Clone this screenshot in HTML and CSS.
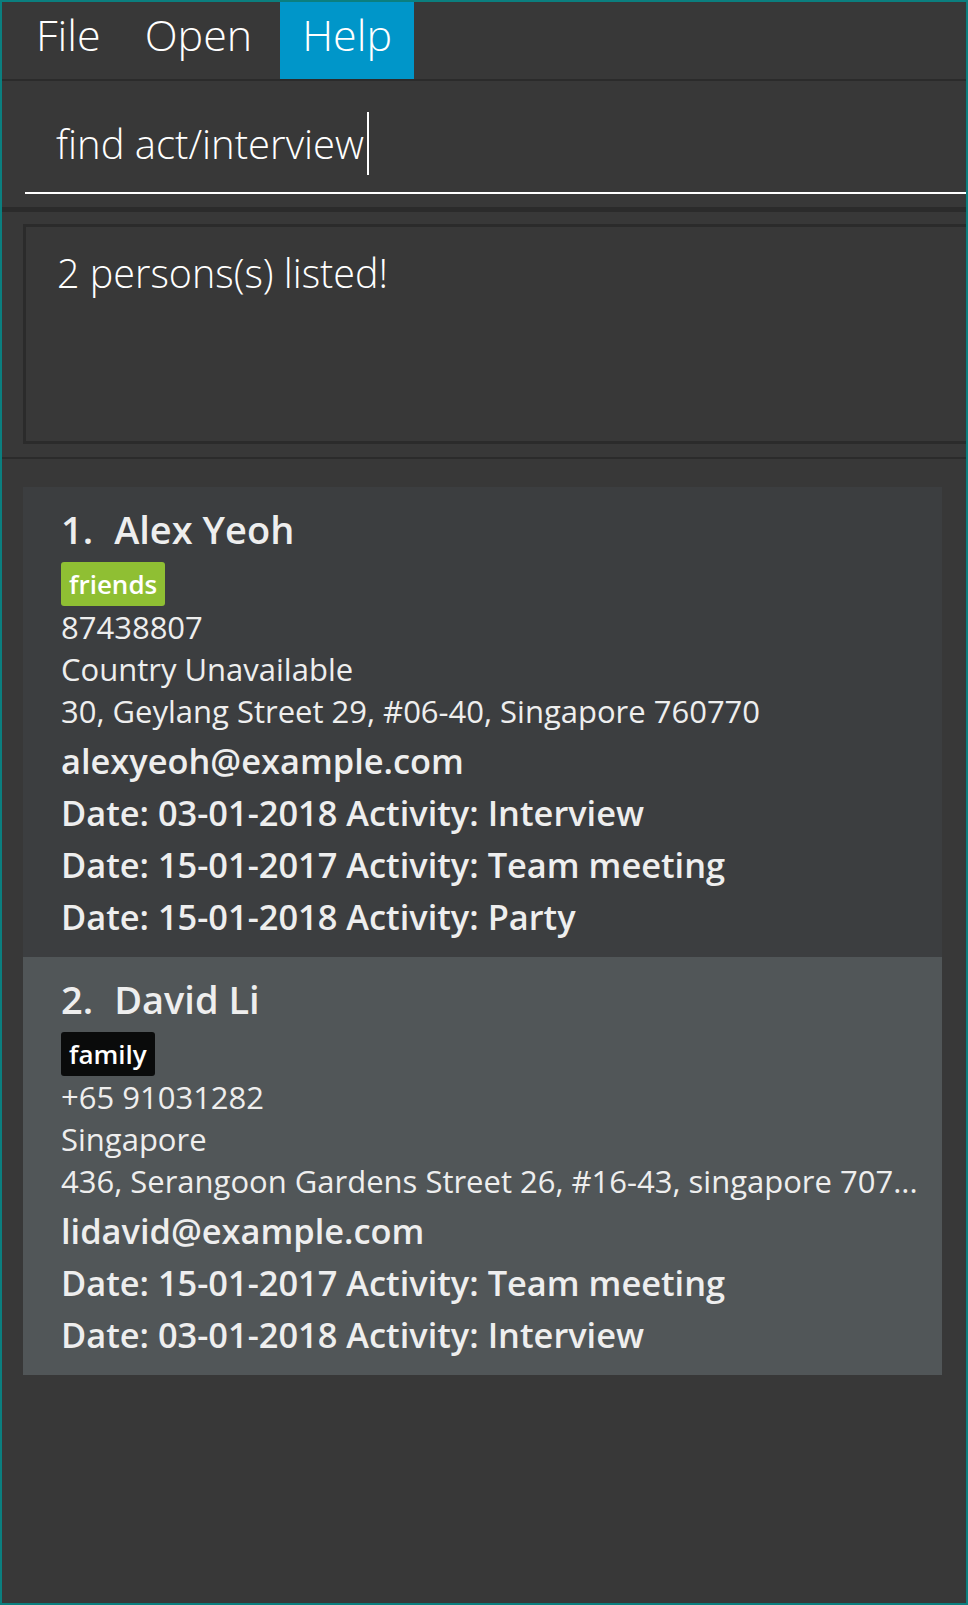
FILE: index.html
```html
<!DOCTYPE html>
<html lang="en">
<head>
<meta charset="utf-8">
<title>Address Book</title>
<link rel="stylesheet" href="styles.css">
</head>
<body>
<div class="window">
  <nav class="menubar">
    <span class="menu-item">File</span>
    <span class="menu-item">Open</span>
    <span class="menu-item active">Help</span>
  </nav>

  <section class="command-pane">
    <div class="command-field">
      <span class="command-text">find act/interview</span><span class="caret"></span>
    </div>
  </section>

  <section class="result-pane">
    <div class="result-box">2 persons(s) listed!</div>
  </section>

  <section class="list-pane">
    <ul class="person-list">
      <li class="card">
        <div class="card-name"><span class="card-id">1.</span><span>Alex Yeoh</span></div>
        <div class="tags"><span class="tag tag-friends">friends</span></div>
        <div class="card-line">87438807</div>
        <div class="card-line">Country Unavailable</div>
        <div class="card-line">30, Geylang Street 29, #06-40, Singapore 760770</div>
        <div class="card-strong card-email">alexyeoh@example.com</div>
        <div class="card-strong">Date: 03-01-2018 Activity: Interview</div>
        <div class="card-strong">Date: 15-01-2017 Activity: Team meeting</div>
        <div class="card-strong">Date: 15-01-2018 Activity: Party</div>
      </li>
      <li class="card card-selected">
        <div class="card-name"><span class="card-id">2.</span><span>David Li</span></div>
        <div class="tags"><span class="tag tag-family">family</span></div>
        <div class="card-line">+65 91031282</div>
        <div class="card-line">Singapore</div>
        <div class="card-line">436, Serangoon Gardens Street 26, #16-43, singapore 707...</div>
        <div class="card-strong card-email">lidavid@example.com</div>
        <div class="card-strong">Date: 15-01-2017 Activity: Team meeting</div>
        <div class="card-strong">Date: 03-01-2018 Activity: Interview</div>
      </li>
    </ul>
  </section>
</div>
</body>
</html>
```

FILE: styles.css
```css
* {
  box-sizing: border-box;
}

html, body {
  margin: 0;
  padding: 0;
}

body {
  font-family: "Open Sans", "Noto Sans", sans-serif;
  background: #0b7f7f;
}

.window {
  width: 968px;
  height: 1605px;
  border: 2px solid #0b7f7f;
  background: #383838;
  display: flex;
  flex-direction: column;
  overflow: hidden;
}

/* Menu bar */
.menubar {
  display: flex;
  height: 79px;
  padding-left: 12px;
  border-bottom: 2px solid #2b2b2b;
  flex-shrink: 0;
}

.menu-item {
  font-size: 43px;
  font-weight: 300;
  color: #ffffff;
  line-height: 60px;
  padding: 3px 22px 14px;
  height: 77px;
}

.menu-item.active {
  background: #0096c9;
  margin-left: 6px;
}

/* Command box */
.command-pane {
  height: 126px;
  padding: 0 0 0 23px;
  border-bottom: 5px solid #2b2b2b;
  flex-shrink: 0;
  box-sizing: content-box;
}

.command-field {
  display: flex;
  align-items: center;
  height: 113px;
  padding-left: 31px;
  border-bottom: 2px solid #ffffff;
  padding-top: 14px;
}

.command-text {
  font-size: 40px;
  font-weight: 300;
  color: #ffffff;
  line-height: 60px;
}

.caret {
  display: inline-block;
  width: 2px;
  height: 63px;
  background: #ffffff;
  margin-left: 3px;
}

/* Result display */
.result-pane {
  height: 247px;
  padding: 12px 0 13px 21px;
  border-bottom: 2px solid #2b2b2b;
  flex-shrink: 0;
}

.result-box {
  height: 220px;
  border: 3px solid #2b2b2b;
  border-right: none;
  padding: 16px 0 0 31px;
  font-size: 39.5px;
  font-weight: 300;
  color: #ffffff;
  line-height: 60px;
}

/* Person list */
.list-pane {
  flex: 1;
  padding: 28px 24px 0 21px;
}

.person-list {
  list-style: none;
  margin: 0;
  padding: 0;
}

.card {
  background: #3c3e40;
  padding: 17px 0 14px 38px;
  color: #eeeeee;
}

.card-selected {
  background: #515658;
}

.card-name {
  display: flex;
  gap: 21px;
  font-size: 38px;
  font-weight: 600;
  line-height: 50px;
}

.tags {
  display: flex;
  margin-top: 8px;
}

.tag {
  font-size: 26px;
  font-weight: 600;
  line-height: 44px;
  height: 44px;
  padding: 0 8px;
  border-radius: 3px;
  color: #ffffff;
}

.tag-friends {
  background: #8fbf33;
}

.tag-family {
  background: #0a0b0b;
}

.card-line {
  font-size: 31px;
  line-height: 42px;
  white-space: nowrap;
}

.card-strong {
  font-size: 34.4px;
  font-weight: 600;
  line-height: 52px;
  white-space: nowrap;
}

.card-email {
  margin-top: 3px;
}
```
